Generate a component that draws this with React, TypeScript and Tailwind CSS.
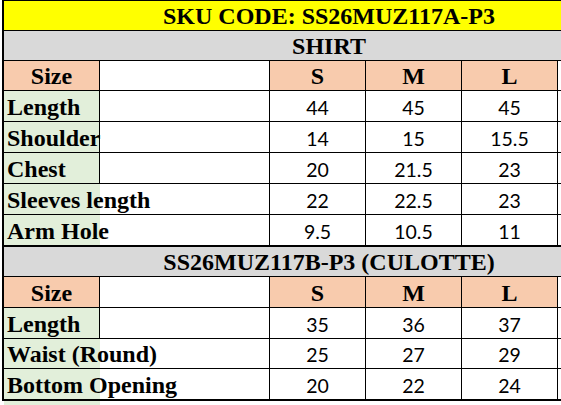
const serif = "font-['Liberation_Serif','Times_New_Roman',serif] font-bold text-[24px] leading-none";
const num = "font-['Lato','Carlito',sans-serif] text-[19.5px] leading-none";

type Row = { label: string; s: string; m: string; l: string; h: string; divider: boolean; thick?: boolean };

const shirt: Row[] = [
  { label: "Length", s: "44", m: "45", l: "45", h: "h-[31px]", divider: true },
  { label: "Shoulder", s: "14", m: "15", l: "15.5", h: "h-[31px]", divider: true },
  { label: "Chest", s: "20", m: "21.5", l: "23", h: "h-[31px]", divider: true },
  { label: "Sleeves length", s: "22", m: "22.5", l: "23", h: "h-[31px]", divider: false },
  { label: "Arm Hole", s: "9.5", m: "10.5", l: "11", h: "h-[32px]", divider: false, thick: true },
];

const culotte: Row[] = [
  { label: "Length", s: "35", m: "36", l: "37", h: "h-[31px]", divider: true },
  { label: "Waist (Round)", s: "25", m: "27", l: "29", h: "h-[30px]", divider: false },
  { label: "Bottom Opening", s: "20", m: "22", l: "24", h: "h-[32px]", divider: false, thick: true },
];

const TitleRow = ({ text, bg, h, top }: { text: string; bg: string; h: string; top?: boolean }) => (
  <div className={`flex items-end justify-center border-l-2 border-b border-black pl-[96px] pr-[3px] pb-[2px] ${bg} ${h} ${top ? "border-t" : ""}`}>
    <span className={serif}>{text}</span>
  </div>
);

const SizeRow = ({ h }: { h: string }) => (
  <div className={`flex border-l-2 border-b border-black ${h}`}>
    <div className="flex w-[96px] items-end justify-center border-r border-black bg-[#F8CBAD] pb-[2px]">
      <span className={serif}>Size</span>
    </div>
    <div className="w-[170px] border-r border-black bg-white" />
    {["S", "M", "L"].map((s) => (
      <div key={s} className="flex w-[96px] items-end justify-center border-r border-black bg-[#F8CBAD] pb-[2px]">
        <span className={serif}>{s}</span>
      </div>
    ))}
    <div className="flex-1 bg-white" />
  </div>
);

const DataRow = ({ r }: { r: Row }) => (
  <div className={`flex border-l-2 border-black ${r.thick ? "border-b-2" : "border-b"} ${r.h}`}>
    <div className={`relative z-10 flex w-[96px] items-end bg-[#E2EFDA] pl-[3px] pb-[2px] ${r.divider ? "border-r border-black" : ""}`}>
      <span className={`${serif} whitespace-nowrap`}>{r.label}</span>
    </div>
    <div className="w-[170px] border-r border-black bg-white" />
    {[r.s, r.m, r.l].map((v, i) => (
      <div key={i} className="flex w-[96px] items-end justify-center border-r border-black bg-white pb-[4px]">
        <span className={num}>{v}</span>
      </div>
    ))}
    <div className="flex-1 bg-white" />
  </div>
);

export default function App() {
  return (
    <div className="h-[405px] w-[561px] overflow-hidden bg-white text-black">
      <div className="ml-[2px] w-[559px]">
        <TitleRow text="SKU CODE: SS26MUZ117A-P3" bg="bg-[#FFFF00]" h="h-[31px]" top />
        <TitleRow text="SHIRT" bg="bg-[#D9D9D9]" h="h-[30px]" />
        <SizeRow h="h-[30px]" />
        {shirt.map((r) => (
          <DataRow key={r.label} r={r} />
        ))}
        <TitleRow text="SS26MUZ117B-P3 (CULOTTE)" bg="bg-[#D9D9D9]" h="h-[30px]" />
        <SizeRow h="h-[31px]" />
        {culotte.map((r) => (
          <DataRow key={r.label} r={r} />
        ))}
      </div>
      <div className="ml-[4px] h-[4px] w-[96px] bg-[#E2EFDA]" />
    </div>
  );
}
